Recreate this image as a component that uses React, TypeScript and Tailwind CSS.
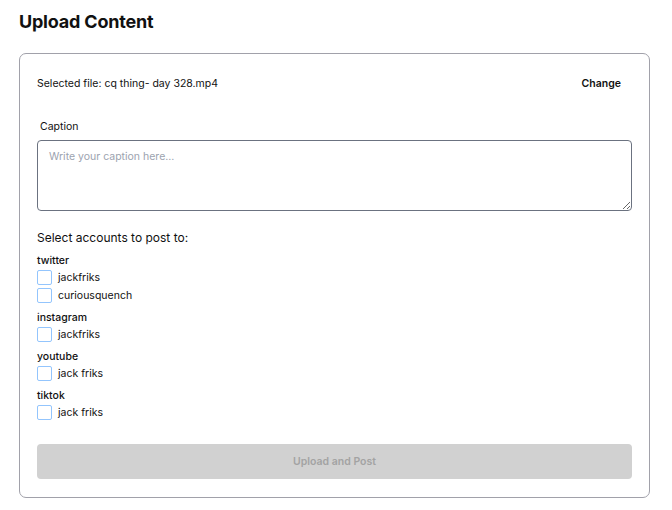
import React from "react";

const groups = [
  { name: "twitter", accounts: ["jackfriks", "curiousquench"] },
  { name: "instagram", accounts: ["jackfriks"] },
  { name: "youtube", accounts: ["jack friks"] },
  { name: "tiktok", accounts: ["jack friks"] },
];

export default function App() {
  return (
    <div className="w-[672px] h-[510px] bg-white px-[19px] pt-[10px] text-[#111] font-['Inter',sans-serif]">
      <h1 className="text-[18px] font-bold leading-[24px] tracking-[-0.2px]">Upload Content</h1>
      <div className="mt-[19px] w-[631px] border border-[#a1a1aa] rounded-[7px] px-[17px] pt-[22px] pb-[18px]">
        <div className="flex items-center justify-between">
          <span className="text-[10.5px] leading-[16px]">Selected file: cq thing- day 328.mp4</span>
          <button className="text-[10.5px] leading-[16px] font-semibold mr-[11px]">Change</button>
        </div>
        <label className="block mt-[27px] ml-[3px] text-[10.5px] leading-[16px]">Caption</label>
        <textarea
          placeholder="Write your caption here..."
          className="mt-[5px] block w-full h-[71px] border border-[#6b7280] rounded-[4px] px-[11px] py-[8px] text-[10.5px] leading-[16px] placeholder:text-[#9ca3af] outline-none"
        />
        <div className="mt-[18px] text-[12px] leading-[18px]">Select accounts to post to:</div>
        <div className="mt-[5px]">
          {groups.map((g) => (
            <div key={g.name} className="mb-[4px]">
              <div className="text-[10.5px] leading-[17px] font-medium">{g.name}</div>
              {g.accounts.map((a) => (
                <label key={a} className="flex items-start gap-[6px] h-[18px]">
                  <span className="mt-[1px] w-[15px] h-[15px] shrink-0 border border-[#93c5fd] rounded-[2px] bg-white" />
                  <span className="text-[10.5px] leading-[18px]">{a}</span>
                </label>
              ))}
            </div>
          ))}
        </div>
        <button
          disabled
          className="mt-[18px] w-full h-[35px] rounded-[4px] bg-[#d1d1d1] text-[#a3a3a3] text-[10.5px] font-semibold"
        >
          Upload and Post
        </button>
      </div>
    </div>
  );
}
